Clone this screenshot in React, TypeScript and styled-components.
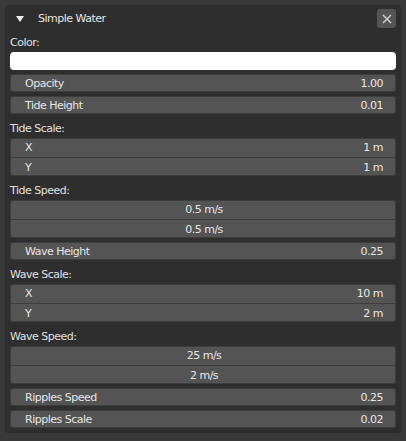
import * as React from 'react';
import styled, { createGlobalStyle } from 'styled-components';

const GlobalStyle = createGlobalStyle`
  html, body {
    margin: 0;
    padding: 0;
    background: #393939;
  }
  body {
    font-family: "DejaVu Sans", "Liberation Sans", sans-serif;
    font-size: 11px;
    color: #e6e6e6;
  }
`;

type Field = { label?: string; value: string };

type Item =
  | { kind: 'row'; label: string; value: string }
  | { kind: 'group'; title: string; fields: Field[] };

const items: Item[] = [
  { kind: 'row', label: 'Opacity', value: '1.00' },
  { kind: 'row', label: 'Tide Height', value: '0.01' },
  {
    kind: 'group',
    title: 'Tide Scale:',
    fields: [
      { label: 'X', value: '1 m' },
      { label: 'Y', value: '1 m' },
    ],
  },
  {
    kind: 'group',
    title: 'Tide Speed:',
    fields: [{ value: '0.5 m/s' }, { value: '0.5 m/s' }],
  },
  { kind: 'row', label: 'Wave Height', value: '0.25' },
  {
    kind: 'group',
    title: 'Wave Scale:',
    fields: [
      { label: 'X', value: '10 m' },
      { label: 'Y', value: '2 m' },
    ],
  },
  {
    kind: 'group',
    title: 'Wave Speed:',
    fields: [{ value: '25 m/s' }, { value: '2 m/s' }],
  },
  { kind: 'row', label: 'Ripples Speed', value: '0.25' },
  { kind: 'row', label: 'Ripples Scale', value: '0.02' },
];

const App = () => (
  <>
    <GlobalStyle />
    <Page>
      <Panel>
        <Header>
          <Arrow />
          <Title>Simple Water</Title>
          <CloseButton aria-label="close">
            <svg width="10" height="10" viewBox="0 0 10 10">
              <path d="M1 1 L9 9 M9 1 L1 9" stroke="#d8d8d8" strokeWidth="1.3" />
            </svg>
          </CloseButton>
        </Header>
        <Body>
          <Label>Color:</Label>
          <ColorBar />
          {items.map((item, i) =>
            item.kind === 'row' ? (
              <Row key={i}>
                <span>{item.label}</span>
                <span>{item.value}</span>
              </Row>
            ) : (
              <React.Fragment key={i}>
                <Label>{item.title}</Label>
                <Group>
                  {item.fields.map((f, j) => (
                    <GroupRow key={j} $center={!f.label}>
                      {f.label && <span>{f.label}</span>}
                      <span>{f.value}</span>
                    </GroupRow>
                  ))}
                </Group>
              </React.Fragment>
            )
          )}
        </Body>
      </Panel>
    </Page>
  </>
);

export default App;

const Page = styled.div`
  padding: 5px 5px 0 5px;
  width: 406px;
  height: 441px;
  box-sizing: border-box;
`;

const Panel = styled.div`
  background: #2e2e2e;
  border-radius: 4px;
  box-shadow: 0 1px 1px rgba(0, 0, 0, 0.25);
`;

const Header = styled.div`
  display: flex;
  align-items: center;
  height: 27px;
  padding: 0 5px 0 11px;
`;

const Arrow = styled.div`
  width: 0;
  height: 0;
  border-left: 4px solid transparent;
  border-right: 4px solid transparent;
  border-top: 6px solid #f0f0f0;
  margin-top: 1px;
`;

const Title = styled.div`
  flex: 1;
  margin-left: 14px;
  color: #e6e6e6;
  letter-spacing: -0.5px;
`;

const CloseButton = styled.div`
  width: 19px;
  height: 19px;
  border-radius: 3px;
  background: #545454;
  display: flex;
  align-items: center;
  justify-content: center;
`;

const Body = styled.div`
  display: flex;
  flex-direction: column;
  padding: 0 5px;
`;

const Label = styled.div`
  height: 20px;
  display: flex;
  align-items: center;
  color: #e0e0e0;
  letter-spacing: -0.5px;
`;

const ColorBar = styled.div`
  height: 18px;
  border-radius: 4px;
  background: #ffffff;
  margin-bottom: 4px;
`;

const Row = styled.div`
  height: 18px;
  border-radius: 4px;
  background: #545454;
  box-shadow: inset 0 0 0 1px #3d3d3d;
  display: flex;
  align-items: center;
  justify-content: space-between;
  padding: 0 13px 0 15px;
  margin-bottom: 4px;
  color: #e6e6e6;
  letter-spacing: -0.5px;
`;

const Group = styled.div`
  border-radius: 4px;
  background: #545454;
  box-shadow: inset 0 0 0 1px #3d3d3d;
  overflow: hidden;
  margin-bottom: 4px;
`;

const GroupRow = styled.div<{ $center?: boolean }>`
  height: 19px;
  display: flex;
  align-items: center;
  justify-content: ${(p) => (p.$center ? 'center' : 'space-between')};
  padding: 0 13px 0 15px;
  color: #e6e6e6;
  letter-spacing: -0.5px;
  & + & {
    border-top: 1px solid #3d3d3d;
    height: 18px;
  }
`;
